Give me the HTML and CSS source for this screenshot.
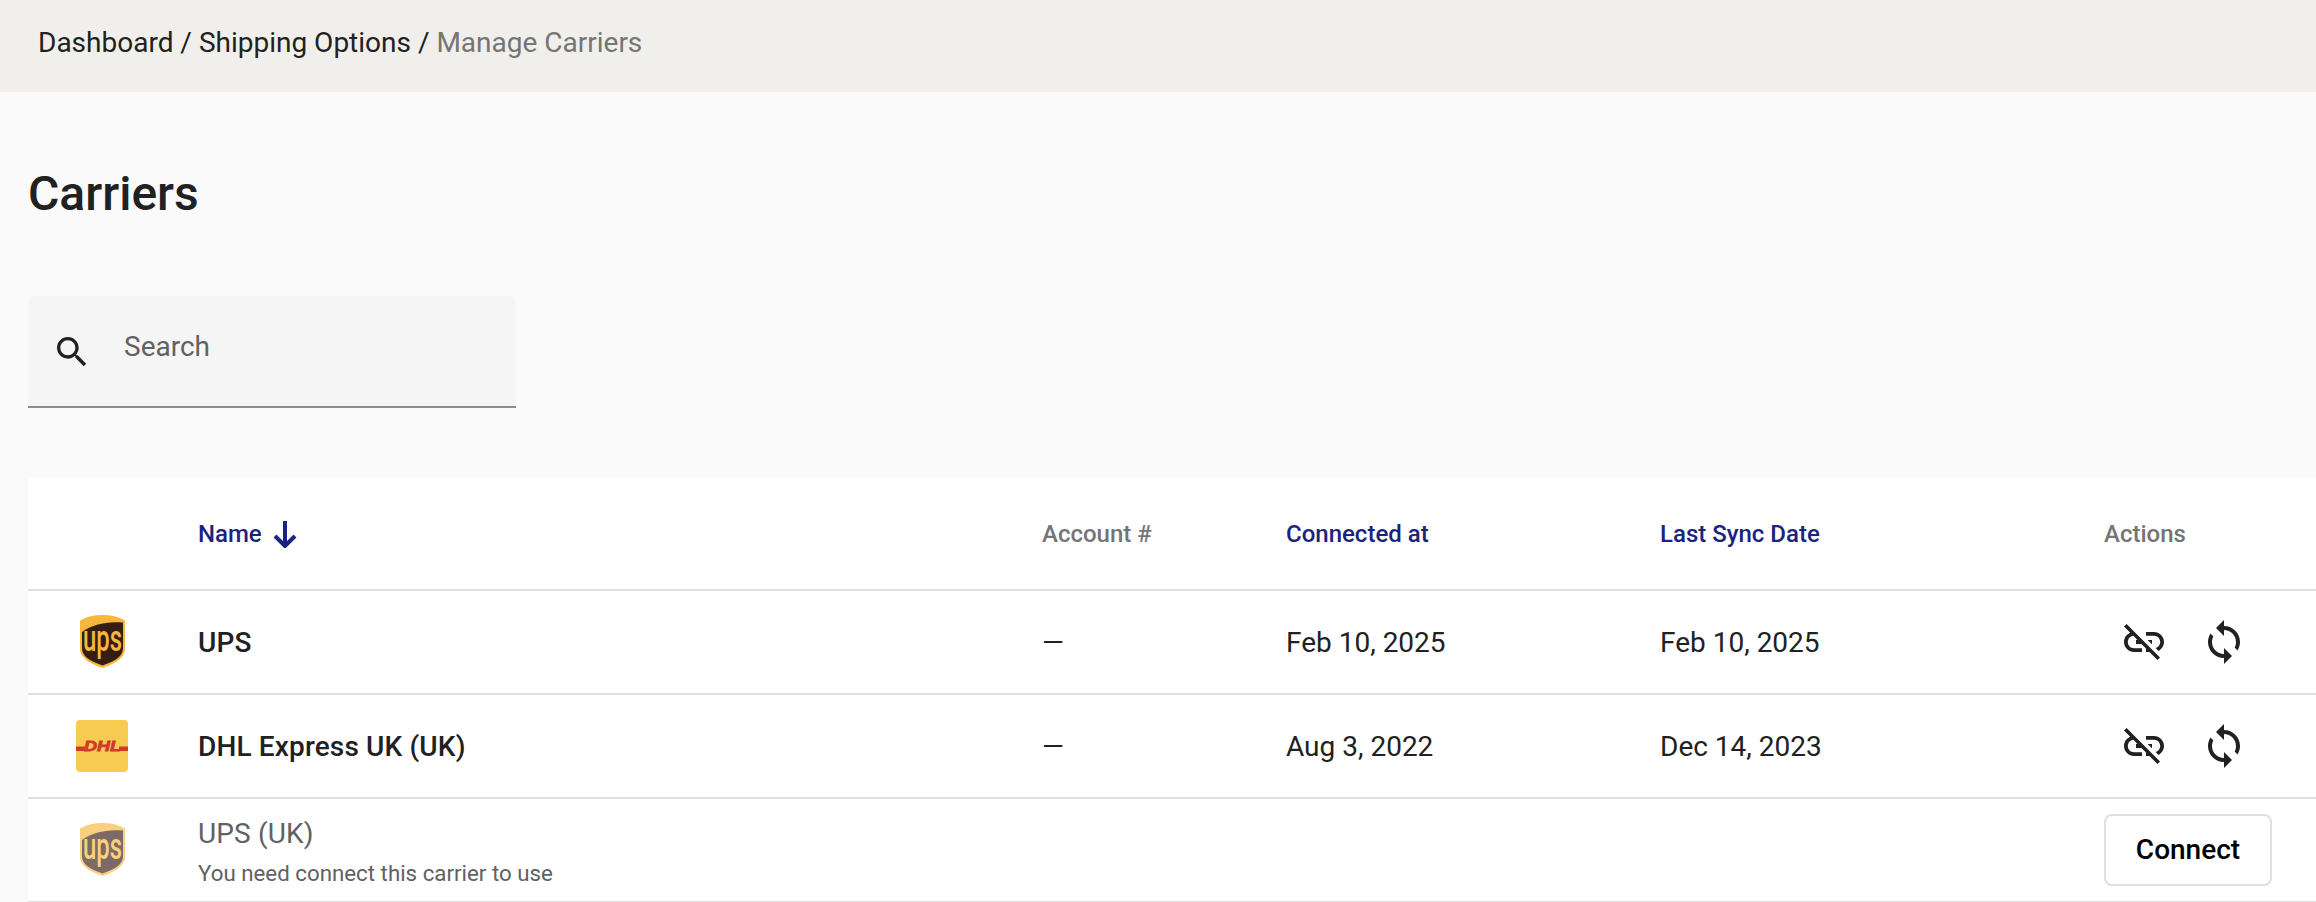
FILE: index.html
```html
<!DOCTYPE html>
<html lang="en">
<head>
<meta charset="UTF-8">
<meta name="viewport" content="width=device-width, initial-scale=1.0">
<title>Manage Carriers</title>
<link rel="stylesheet" href="styles.css">
</head>
<body>

<svg class="defs" width="0" height="0">
    <defs>
        <symbol id="ups-logo" viewBox="0 0 45 53">
            <path d="M22.5 0C14 0 6.500 1.700 0 5.600V33C0 42 7 47.500 22.500 53C38 47.500 45 42 45 33V5.600C38.500 1.700 31 0 22.500 0z" fill="#f6b73c"/>
            <path d="M43 7.500V33C43 40.500 37 45.500 22.500 50.500C8 45.500 2 40.500 2 33V17C12 9.500 27 6 43 7.500z" fill="#351c15"/>
            <text x="22.500" y="36" text-anchor="middle" textLength="39" lengthAdjust="spacingAndGlyphs" class="ups-text">ups</text>
        </symbol>
        <symbol id="icon-link-off" viewBox="0 0 24 24">
            <path d="M17 7h-4v1.900h4c1.710 0 3.100 1.390 3.100 3.100 0 1.430-.98 2.630-2.310 2.980l1.460 1.460C20.880 15.610 22 13.950 22 12c0-2.760-2.240-5-5-5zm-1 4h-2.190l2 2H16zM2 4.270l3.110 3.110C3.290 8.120 2 9.910 2 12c0 2.760 2.240 5 5 5h4v-1.900H7c-1.710 0-3.100-1.390-3.100-3.100 0-1.590 1.210-2.900 2.760-3.070L8.730 11H8v2h2.730L13 15.270V17h1.730l4.010 4L20 19.740 3.270 3 2 4.270z"/>
        </symbol>
        <symbol id="icon-sync" viewBox="0 0 24 24">
            <path d="M12 4V1L8 5l4 4V6c3.310 0 6 2.690 6 6 0 1.010-.25 1.970-.7 2.800l1.460 1.460C19.540 15.030 20 13.570 20 12c0-4.420-3.580-8-8-8zm0 14c-3.310 0-6-2.690-6-6 0-1.010.25-1.970.7-2.800L5.240 7.740C4.460 8.970 4 10.430 4 12c0 4.420 3.580 8 8 8v3l4-4-4-4v3z"/>
        </symbol>
    </defs>
</svg>

<div class="topbar">
    <a href="#">Dashboard</a> / <a href="#">Shipping Options</a> / <span class="current">Manage Carriers</span>
</div>

<div class="content">
    <h1>Carriers</h1>

    <div class="search">
        <svg class="search-icon" viewBox="0 0 24 24"><path d="M15.500 14h-.79l-.28-.27C15.410 12.590 16 11.110 16 9.500 16 5.910 13.090 3 9.500 3S3 5.910 3 9.500 5.910 16 9.500 16c1.610 0 3.090-.59 4.230-1.570l.27.28v.79l5 4.990L20.490 19l-4.990-5zm-6 0C7.010 14 5 11.990 5 9.500S7.010 5 9.500 5 14 7.010 14 9.500 11.990 14 9.500 14z"/></svg>
        <input type="text" placeholder="Search">
    </div>

    <table class="carriers">
        <colgroup>
            <col class="col-logo">
            <col class="col-name">
            <col class="col-account">
            <col class="col-connected">
            <col class="col-sync">
            <col class="col-actions">
        </colgroup>
        <thead>
            <tr>
                <th></th>
                <th class="sortable">
                    <span class="sort-label">Name
                        <svg class="sort-arrow" viewBox="0 0 24 28"><path d="M12 1V26M2 16L12 26L22 16"/></svg>
                    </span>
                </th>
                <th>Account #</th>
                <th class="sortable">Connected at</th>
                <th class="sortable">Last Sync Date</th>
                <th>Actions</th>
            </tr>
        </thead>
        <tbody>
            <tr>
                <td><div class="logo"><svg class="ups"><use href="#ups-logo"/></svg></div></td>
                <td class="name">UPS</td>
                <td>—</td>
                <td>Feb 10, 2025</td>
                <td>Feb 10, 2025</td>
                <td>
                    <div class="actions">
                        <svg class="action-icon"><use href="#icon-link-off"/></svg>
                        <svg class="action-icon"><use href="#icon-sync"/></svg>
                    </div>
                </td>
            </tr>
            <tr>
                <td>
                    <div class="logo">
                        <svg class="dhl" viewBox="0 0 52 52">
                            <rect width="52" height="52" rx="4" fill="#f5cb52"/>
                            <rect y="26.500" width="9" height="4.500" fill="#d13a2b"/>
                            <rect x="43" y="26.500" width="9" height="4.500" fill="#d13a2b"/>
                            <text x="26.500" y="31" text-anchor="middle" textLength="37" lengthAdjust="spacingAndGlyphs" class="dhl-text">DHL</text>
                        </svg>
                    </div>
                </td>
                <td class="name">DHL Express UK (UK)</td>
                <td>—</td>
                <td>Aug 3, 2022</td>
                <td>Dec 14, 2023</td>
                <td>
                    <div class="actions">
                        <svg class="action-icon"><use href="#icon-link-off"/></svg>
                        <svg class="action-icon"><use href="#icon-sync"/></svg>
                    </div>
                </td>
            </tr>
            <tr class="disconnected">
                <td><div class="logo"><svg class="ups"><use href="#ups-logo"/></svg></div></td>
                <td class="name">
                    UPS (UK)
                    <div class="hint">You need connect this carrier to use</div>
                </td>
                <td></td>
                <td></td>
                <td></td>
                <td><button type="button" class="connect">Connect</button></td>
            </tr>
        </tbody>
    </table>
</div>

</body>
</html>
```

FILE: styles.css
```css
body {
    font-family: Roboto, "Liberation Sans", sans-serif;
    margin: 0;
    padding: 0;
    background-color: #fafafa;
    color: #212121;
    overflow: hidden;
}
.defs {
    display: block;
}
.ups-text {
    font-family: Roboto, sans-serif;
    font-size: 36px;
    font-weight: 500;
    fill: #f6b73c;
}
.dhl-text {
    font-family: "Liberation Sans", sans-serif;
    font-size: 15px;
    font-weight: 700;
    font-style: italic;
    fill: #d13a2b;
    stroke: #d13a2b;
    stroke-width: 0.8;
}
.topbar {
    height: 92px;
    line-height: 86px;
    padding-left: 38px;
    background-color: #f1efeb;
    font-size: 28px;
    box-sizing: border-box;
}
.topbar a {
    color: #212121;
    text-decoration: none;
}
.topbar .current {
    color: #757575;
}
.content {
    padding-left: 28px;
}
h1 {
    margin: 74px 0 74px;
    font-size: 48px;
    line-height: 56px;
    font-weight: 500;
}
.search {
    display: flex;
    align-items: flex-start;
    width: 488px;
    height: 112px;
    box-sizing: border-box;
    background-color: #f5f5f5;
    border-bottom: 2px solid #8c8c8c;
    border-radius: 6px 6px 0 0;
}
.search-icon {
    width: 40px;
    height: 40px;
    margin: 36px 32px 0 24px;
    fill: #212121;
}
.search input {
    margin-top: 33px;
    height: 34px;
    width: 340px;
    padding: 0;
    border: none;
    outline: none;
    background: none;
    font-family: inherit;
    font-size: 28px;
}
.search input::placeholder {
    color: #616161;
    opacity: 1;
}
.carriers {
    margin-top: 70px;
    width: 2288px;
    table-layout: fixed;
    border-collapse: separate;
    border-spacing: 0;
    background-color: #fff;
}
.col-logo { width: 170px; }
.col-name { width: 844px; }
.col-account { width: 244px; }
.col-connected { width: 374px; }
.col-sync { width: 444px; }
.col-actions { width: 212px; }
.carriers th,
.carriers td {
    padding: 0;
    text-align: left;
    box-sizing: border-box;
    border-bottom: 2px solid #e0e0e0;
}
.carriers th {
    height: 113px;
    font-size: 24px;
    font-weight: 500;
    color: #757575;
}
.carriers th.sortable {
    color: #1a237e;
}
.sort-label {
    display: flex;
    align-items: center;
    gap: 11px;
}
.sort-arrow {
    width: 24px;
    height: 28px;
    fill: none;
    stroke: #1a237e;
    stroke-width: 4;
}
.carriers td {
    height: 104px;
    font-size: 28px;
}
.carriers td.name {
    font-weight: 500;
    letter-spacing: 0.15px;
}
.logo {
    display: flex;
    justify-content: center;
    width: 52px;
    margin-left: 48px;
}
.logo .ups {
    width: 45px;
    height: 53px;
    margin-bottom: 2px;
}
.logo .dhl {
    width: 52px;
    height: 52px;
}
.actions {
    display: flex;
    gap: 32px;
    padding-left: 16px;
}
.action-icon {
    width: 48px;
    height: 48px;
    fill: #212121;
}
.disconnected .logo {
    opacity: 0.65;
}
.carriers .disconnected td.name {
    padding-top: 4px;
    color: #616161;
    font-weight: 400;
    line-height: 34px;
}
.hint {
    margin-top: 8px;
    font-size: 22.300px;
    line-height: 28px;
    letter-spacing: 0;
}
.connect {
    display: block;
    width: 168px;
    height: 72px;
    padding: 0 0 2px;
    border: 2px solid #e0e0e0;
    border-radius: 8px;
    background-color: #fff;
    color: #000;
    font-family: inherit;
    font-size: 28px;
    font-weight: 500;
}
```
